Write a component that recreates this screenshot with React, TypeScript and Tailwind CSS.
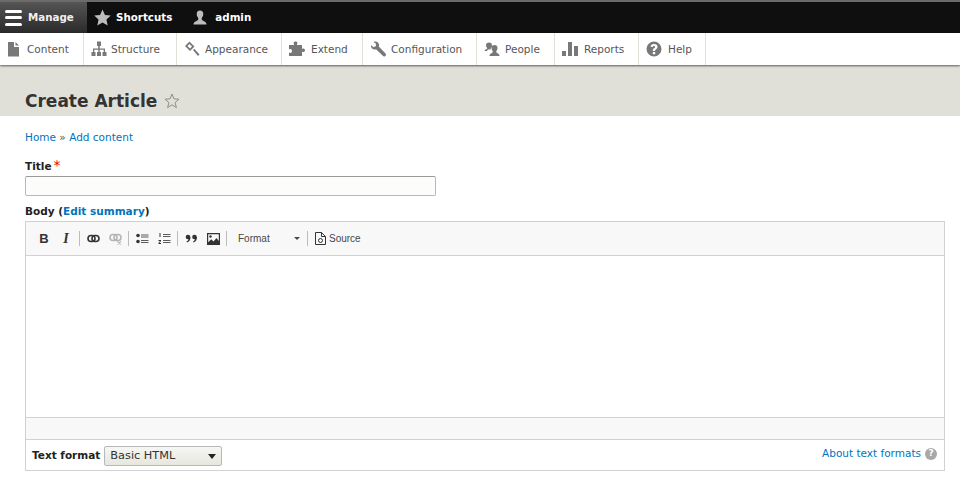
import type { ReactNode } from 'react';

const font = { fontFamily: '"DejaVu Sans", sans-serif' };

function Svg({ size = 16, className = '', children }: { size?: number; className?: string; children: ReactNode }) {
  return (
    <svg width={size} height={size} viewBox="0 0 16 16" className={`shrink-0 ${className}`} fill="currentColor">
      {children}
    </svg>
  );
}

const trayItems: { label: string; width: string; gap: string; icon: ReactNode }[] = [
  {
    label: 'Content',
    width: 'w-[84px]',
    gap: 'gap-[4px]',
    icon: <path d="M1 1h6v5h5v9.500H1zM8.500 1 12 4.500H8.500z" />,
  },
  {
    label: 'Structure',
    width: 'w-[93px]',
    gap: 'gap-[4px]',
    icon: (
      <path d="M6 0.500h4v4.500H8.800V7.500H14v3.500h1.500v4h-4v-4h1.200V8.800H8.700V11H10v4H6v-4h1.300V8.800H3.300V11h1.200v4h-4v-4H2V7.500h5.200V5H6z" />
    ),
  },
  {
    label: 'Appearance',
    width: 'w-[105px]',
    gap: 'gap-[5px]',
    icon: <path fillRule="evenodd" d="M5.500 0.500 10.500 5.500 6 10 1 5zM5.500 3 3.500 5 6 7.500 8 5.500zM9 9l1.300-1.300L15.500 13.500 14 15z" />,
  },
  {
    label: 'Extend',
    width: 'w-[81px]',
    gap: 'gap-[6px]',
    icon: (
      <path d="M0 4h5V3C4 2 4.500 0.500 6.500 0.500S9 2 8 3v1h5v4c1-1 3-0.500 3 1.300S14 11.500 13 10.500V15H0v-3.500c1.300 1 3 .3 3-1.500S1.300 7.500 0 8.500z" />
    ),
  },
  {
    label: 'Configuration',
    width: 'w-[114px]',
    gap: 'gap-[5px]',
    icon: <path d="M1 4 3.500 6.300 6 5 5.800 2.500 3.500 1C6 0 8.500 1 9 3.500c.2.800 0 1.500-.2 2L15.500 12.500c.8 1 .7 1.700-.2 2.500s-1.800.7-2.500-.2L6 8.200C3.500 9 .5 7.500 1 4z" />,
  },
  {
    label: 'People',
    width: 'w-[78px]',
    gap: 'gap-[5px]',
    icon: (
      <path d="M5 1.500c2 0 3 1.200 3 2.800 0 1.300-.6 2.200-1.300 2.900v1.300H4c-.5.500-.9 1-1 1.500H.5c0-1.500 2.300-1.800 2.800-2.800V7.200C2.600 6.500 2 5.600 2 4.300 2 2.700 3 1.500 5 1.500zM10.500 4c2 0 3 1.300 3 3 0 1.300-.6 2.300-1.200 3v1.300c.6 1 3.200 1.200 3.200 3.700h-10c0-2.500 2.600-2.700 3.200-3.700V10C8.100 9.300 7.500 8.300 7.500 7c0-1.700 1-3 3-3z" />
    ),
  },
  {
    label: 'Reports',
    width: 'w-[84px]',
    gap: 'gap-[6px]',
    icon: <path d="M0 10h4v5H0zM6 1h4v14H6zM12 5h4v10h-4z" />,
  },
  {
    label: 'Help',
    width: 'w-[67px]',
    gap: 'gap-[6px]',
    icon: (
      <path
        fillRule="evenodd"
        d="M8 0.500a7.500 7.500 0 1 1 0 15 7.500 7.500 0 0 1 0-15zM6.800 11v2.200h2.400V11zM8 3C6 3 4.800 4 4.600 5.800l2.200.3C6.900 5.300 7.300 5 8 5c.7 0 1.100.4 1.100.9 0 .6-.5.900-1.100 1.400-.9.700-1.200 1.300-1.200 2.700h2.300c0-.8.200-1.100.9-1.600.9-.7 1.500-1.400 1.500-2.600C11.500 4 10 3 8 3z"
      />
    ),
  },
];

function TrayItem({ label, width, gap, icon }: { label: string; width: string; gap: string; icon: ReactNode }) {
  return (
    <div className={`${width} ${gap} flex h-full items-center border-r border-[#e0e0d8] pl-[7px] text-[10.5px] text-[#565656]`}>
      <Svg className="text-[#787878]">{icon}</Svg>
      <span className="pt-[2px]">{label}</span>
    </div>
  );
}

function Separator() {
  return <span className="mx-[2px] h-[15px] w-px bg-[#bcbcbc]" />;
}

function EditorButton({ children, muted }: { children: ReactNode; muted?: boolean }) {
  return <span className={`flex h-[20px] w-[22px] items-center justify-center ${muted ? 'text-[#b4b4b4]' : 'text-[#333]'}`}>{children}</span>;
}

export default function App() {
  return (
    <div className="h-[477px] w-[960px] overflow-hidden bg-white text-[#333]" style={font}>
      {/* toolbar */}
      <div className="flex h-[33px] border-t-2 border-[#6b6b6b] bg-[#0f0f0f] text-[10.3px] font-bold text-white">
        <div className="flex w-[87px] items-center gap-[6px] bg-gradient-to-b from-[#555] to-[#2b2b2b] pl-[5px]">
          <span className="flex h-[16px] w-[17px] flex-col justify-between">
            <span className="h-[3px] rounded-sm bg-white" />
            <span className="h-[3px] rounded-sm bg-white" />
            <span className="h-[3px] rounded-sm bg-white" />
          </span>
          <span className="text-[#f0f0f0]">Manage</span>
        </div>
        <div className="flex items-center gap-[5px] pl-[7px]">
          <Svg size={17} className="text-[#bdbdbd]">
            <path d="M8 0.500 10.300 5.600 15.800 6.200 11.700 9.900 12.900 15.500 8 12.700 3.100 15.500 4.300 9.900 0.200 6.200 5.700 5.600z" />
          </Svg>
          <span>Shortcuts</span>
        </div>
        <div className="ml-[20px] flex items-center gap-[7px]">
          <Svg size={16} className="text-[#bdbdbd]">
            <path d="M8 0.500c2.200 0 3.300 1.500 3.300 3.500 0 1.700-.7 3-1.500 3.800v2c.8 1.300 4.700 1.500 4.700 4.700h-13c0-3.200 3.900-3.400 4.700-4.700v-2C5.400 7 4.700 5.700 4.700 4c0-2 1.100-3.500 3.300-3.500z" />
          </Svg>
          <span>admin</span>
        </div>
      </div>

      {/* tray */}
      <div className="relative flex h-[32px] bg-white shadow-[0_1px_2px_rgba(0,0,0,0.6)]">
        {trayItems.map((item) => (
          <TrayItem key={item.label} {...item} />
        ))}
      </div>

      {/* page title */}
      <div className="flex h-[51px] items-center gap-[7px] bg-[#e0e0d8] pl-[25px] pt-[21px]">
        <h1 className="text-[17px] font-bold leading-[22px] text-[#333]">Create Article</h1>
        <svg width="16" height="16" viewBox="0 0 16 16" fill="none" stroke="#8f8f86" strokeWidth="1">
          <path d="M8 1 9.900 5.800 15 6.200 11.100 9.500 12.400 14.600 8 11.800 3.600 14.600 4.900 9.500 1 6.200 6.100 5.800z" />
        </svg>
      </div>

      {/* content */}
      <div className="pl-[25px] pr-[15px] text-[10.5px]">
        <div className="mt-[14px] leading-[15px] text-[#0074bd]">
          Home <span className="text-[#555]">»</span> Add content
        </div>

        <div className="mt-[14px] flex h-[15px] items-center font-bold text-[#222]">
          Title
          <span className="ml-[2px] -mt-[3px] text-[14px] font-normal text-[#e00]">*</span>
        </div>
        <div className="mt-[2px] h-[20px] w-[411px] rounded-[2px] border border-[#b8b8b8] border-t-[#999] bg-[#fcfcfa]" />

        <div className="mt-[8px] h-[15px] leading-[15px] font-bold text-[#222]">
          Body (<span className="text-[#0074bd]">Edit summary</span>)
        </div>

        {/* editor */}
        <div className="mt-[2px] border border-[#d1d1d1]">
          <div className="flex h-[34px] items-center border-b border-[#d1d1d1] bg-[#f8f8f8] pl-[7px]">
            <EditorButton><span className="text-[13px] font-bold" style={{ fontFamily: '"Liberation Sans", sans-serif' }}>B</span></EditorButton>
            <EditorButton><span className="text-[14px] font-bold italic" style={{ fontFamily: '"Liberation Serif", serif' }}>I</span></EditorButton>
            <Separator />
            <EditorButton>
              <svg width="13" height="13" viewBox="0 0 13 13" fill="none" stroke="currentColor" strokeWidth="1.600">
                <rect x="1" y="3.500" width="7" height="6" rx="3" />
                <rect x="5" y="3.500" width="7" height="6" rx="3" />
              </svg>
            </EditorButton>
            <EditorButton muted>
              <svg width="13" height="13" viewBox="0 0 13 13" fill="none" stroke="currentColor" strokeWidth="1.600">
                <rect x="1" y="2.500" width="7" height="6" rx="3" />
                <rect x="5" y="2.500" width="7" height="6" rx="3" />
                <path d="M8.500 9.500l3.500 3M12 9.500l-3.500 3" strokeWidth="1.200" />
              </svg>
            </EditorButton>
            <Separator />
            <EditorButton>
              <svg width="13" height="13" viewBox="0 0 13 13" fill="currentColor">
                <circle cx="2" cy="3.500" r="1.800" />
                <circle cx="2" cy="9.500" r="1.800" />
                <path d="M5 2.500h7.500v1H5zM5 4.500h7.500v1H5zM5 8h7.500v1H5zM5 10h7.500v1H5z" opacity="0.800" />
              </svg>
            </EditorButton>
            <EditorButton>
              <svg width="13" height="13" viewBox="0 0 13 13" fill="currentColor">
                <path d="M1.500 1h1v4h-1zM.5 8h2.500v1l-1.500 2H3v1H.5v-1L2 9H.5z" />
                <path d="M5 2h7.500v1H5zM5 4h7.500v1H5zM5 8h7.500v1H5zM5 10h7.500v1H5z" opacity="0.800" />
              </svg>
            </EditorButton>
            <Separator />
            <EditorButton>
              <svg width="13" height="13" viewBox="0 0 13 13" fill="currentColor">
                <circle cx="3" cy="5" r="2.300" />
                <path d="M3.500 5h2c0 3-1.500 5-3.500 5.500l-.5-1C3 9 3.800 7.500 3.500 5z" />
                <circle cx="9.500" cy="5" r="2.300" />
                <path d="M10 5h2c0 3-1.500 5-3.500 5.500l-.5-1C9.500 9 10.300 7.500 10 5z" />
              </svg>
            </EditorButton>
            <EditorButton>
              <svg width="13" height="12" viewBox="0 0 13 12" fill="currentColor" fillRule="evenodd">
                <path d="M0 0h13v12H0zM1.200 1.200v8l3-3 2.300 2.300 3-3.500 2.300 3V1.200z" />
                <circle cx="3.500" cy="3.500" r="1.200" />
              </svg>
            </EditorButton>
            <Separator />
            <div className="flex w-[76px] items-center justify-between pl-[9px] pr-[5px] text-[10px] text-[#484848]" style={{ fontFamily: '"Liberation Sans", sans-serif' }}>
              <span>Format</span>
              <span className="h-0 w-0 border-x-[3px] border-t-[3px] border-x-transparent border-t-[#484848]" />
            </div>
            <Separator />
            <div className="ml-[5px] flex items-center gap-[3px] text-[10px] text-[#484848]" style={{ fontFamily: '"Liberation Sans", sans-serif' }}>
              <svg width="11" height="13" viewBox="0 0 11 13" fill="none" stroke="#333" strokeWidth="1">
                <path d="M.5.500h6l4 4v8H.5zM6.500.500v4h4" />
                <circle cx="5.500" cy="8.500" r="2" />
              </svg>
              <span>Source</span>
            </div>
          </div>
          <div className="h-[161px] bg-white" />
          <div className="h-[22px] border-t border-[#d1d1d1] bg-[#f8f8f8]" />
          <div className="flex h-[31px] items-center justify-between border-t border-[#d1d1d1] pl-[6px] pr-[7px] pt-[2px]">
            <div className="flex items-center gap-[4px]">
              <span className="font-bold text-[#222]">Text format</span>
              <div className="flex h-[20px] w-[118px] items-center justify-between rounded-[2px] border border-[#b8b8b8] bg-gradient-to-b from-[#f6f6f3] to-[#e7e7df] pl-[5px] pr-[5px] text-[11.3px] text-[#333]">
                <span>Basic HTML</span>
                <span className="h-0 w-0 border-x-[4px] border-t-[5px] border-x-transparent border-t-[#222]" />
              </div>
            </div>
            <div className="-mt-[4px] flex items-center gap-[4px] text-[#0074bd]">
              <span>About text formats</span>
              <span className="flex h-[12px] w-[12px] items-center justify-center rounded-full bg-[#a8a8a8] text-[9px] font-bold text-white">?</span>
            </div>
          </div>
        </div>
      </div>
    </div>
  );
}
